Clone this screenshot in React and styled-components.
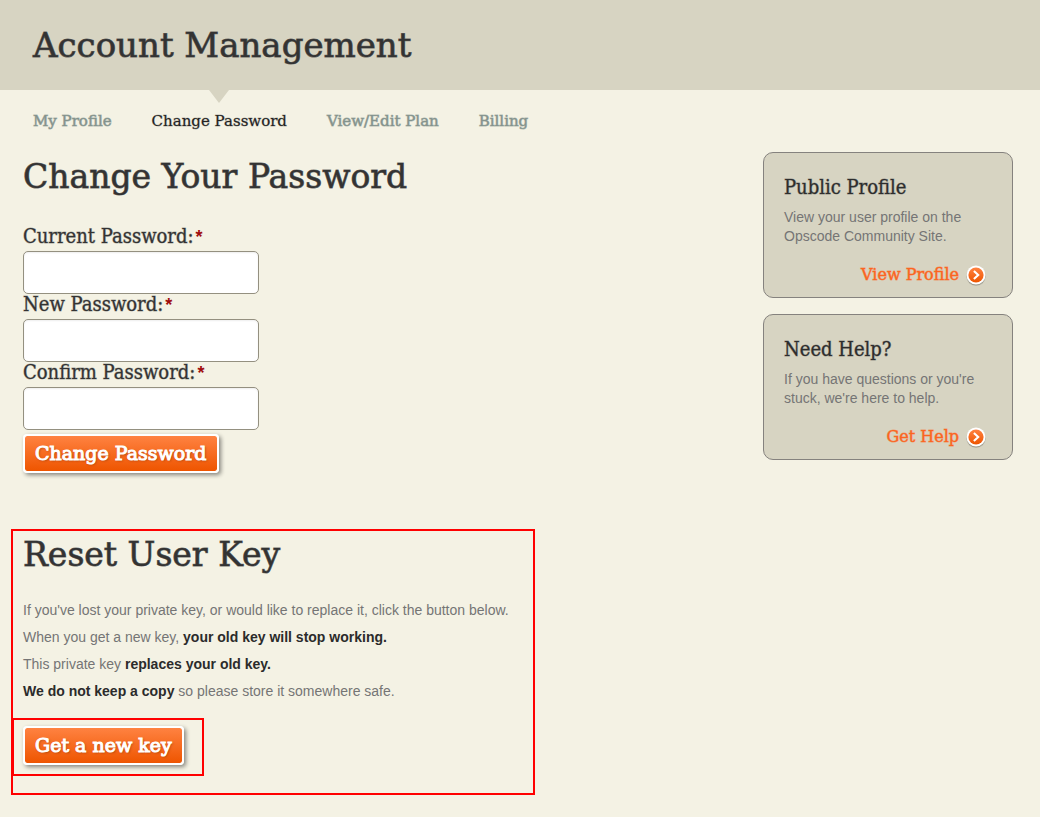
import React from "react";
import styled, { createGlobalStyle } from "styled-components";

const slab = `"DejaVu Serif", "Liberation Serif", serif`;
const slabCondensed = `"DejaVu Serif Condensed", ${slab}`;
const sans = `"Liberation Sans", Arial, sans-serif`;

const GlobalStyle = createGlobalStyle`
  * { box-sizing: border-box; }
  body {
    margin: 0;
    background: #f4f2e4;
    color: #757575;
    font: 14px/19px ${sans};
  }
  h1, h2, h3, p { margin: 0; }
`;

const Header = styled.header`
  padding: 25px 33px;
  background: #d7d4c2;
`;

const Title = styled.h1`
  font: 400 34px/40px ${slab};
  color: #333;
  -webkit-text-stroke: 1px rgba(51, 51, 51, 0.7);
`;

const Heading = styled.h2`
  margin-bottom: ${(p) => p.$gap}px;
  font: 400 33px/40px ${slab};
  color: #333;
  -webkit-text-stroke: 1px rgba(51, 51, 51, 0.7);
`;

const Nav = styled.nav`
  display: flex;
  flex-wrap: wrap;
  gap: 40px;
  padding: 22px 33px;
`;

const NavLink = styled.a`
  position: relative;
  font: 400 15px/18px ${slab};
  color: ${(p) => (p.$active ? "#222" : "#84938d")};
  -webkit-text-stroke: 1px ${(p) => (p.$active ? "rgba(34, 34, 34, 0.3)" : "rgba(132, 147, 141, 0.6)")};
  text-decoration: none;

  &::before {
    content: "";
    display: ${(p) => (p.$active ? "block" : "none")};
    position: absolute;
    top: -22px;
    left: 50%;
    margin-left: -10px;
    border: solid transparent;
    border-width: 13px 10px 0;
    border-top-color: #d7d4c2;
  }
`;

const Main = styled.main`
  display: flex;
  align-items: flex-start;
  justify-content: space-between;
  gap: 24px;
  padding: 0 27px 22px 11px;
`;

const Content = styled.div`
  padding-top: 5px;
`;

const Form = styled.form`
  display: flex;
  flex-direction: column;
  align-items: flex-start;
  padding-left: 12px;
`;

const Label = styled.label`
  padding-bottom: 4px;
  font: 400 20px/21px ${slabCondensed};
  color: #333;
  -webkit-text-stroke: 1px rgba(51, 51, 51, 0.4);
`;

const Required = styled.span`
  margin-left: 2px;
  font: 700 18px/18px ${sans};
  color: #a00d0d;
  -webkit-text-stroke: 0;
`;

const Input = styled.input`
  width: 236px;
  height: 43px;
  padding: 8px;
  border: 1px solid #949080;
  border-radius: 5px;
  background: #fff;
  box-shadow: inset 0 1px 2px #eee;
  font: 16px ${sans};
`;

const Button = styled.button`
  height: 39px;
  margin-top: ${(p) => p.$top || 0}px;
  padding: 0 10px;
  border: 2px solid #fff;
  border-radius: 4px;
  background: linear-gradient(#ff8241, #ee5500) padding-box;
  box-shadow: 2px 2px 4px rgba(0, 0, 0, 0.45);
  font: 400 19px/21px ${slab};
  color: #fff;
  -webkit-text-stroke: 1px #fff;
  text-shadow: 1px 1px 2px rgba(90, 30, 0, 0.5);
  white-space: nowrap;
`;

const ResetPanel = styled.section`
  margin-top: 56px;
  padding: 4px 24px 17px 10px;
  border: 2px solid #f00;
`;

const Line = styled.p`
  line-height: 27px;

  strong { color: #2b2b2b; }
`;

const KeyAction = styled.div`
  width: 192px;
  margin: 13px 0 0 -11px;
  padding: 6px 9px 9px;
  border: 2px solid #f00;
`;

const Sidebar = styled.aside`
  flex: 0 0 250px;
  display: grid;
  gap: 16px;
`;

const Card = styled.section`
  padding: 24px 26px 12px 20px;
  border: 1px solid #85827e;
  border-radius: 10px;
  background: #d7d4c2;
`;

const CardTitle = styled.h3`
  margin-bottom: 10px;
  font: 400 20px/21px ${slabCondensed};
  color: #2d2d2d;
  -webkit-text-stroke: 1px rgba(45, 45, 45, 0.4);
`;

const CardLink = styled.a`
  display: flex;
  align-items: center;
  justify-content: flex-end;
  gap: 7px;
  margin-top: 19px;
  font: 400 16px/20px ${slab};
  color: #fc6420;
  -webkit-text-stroke: 1px rgba(252, 100, 32, 0.5);
  text-decoration: none;

  svg { display: block; overflow: visible; }
`;

function ArrowIcon() {
  return (
    <svg width="20" height="20" viewBox="0 0 20 20" aria-hidden="true">
      <defs>
        <linearGradient id="arrowFill" x1="0" y1="0" x2="0" y2="1">
          <stop offset="0" stopColor="#ff8241" />
          <stop offset="1" stopColor="#ee5500" />
        </linearGradient>
      </defs>
      <circle cx="10" cy="11.4" r="9.7" fill="#000" opacity=".12" />
      <circle cx="10" cy="10.8" r="9.5" fill="#000" opacity=".2" />
      <circle cx="10" cy="10" r="9.5" fill="#fff" />
      <circle cx="10" cy="10" r="7.6" fill="url(#arrowFill)" />
      <path d="M7.9 6l4.3 4-4.3 4" fill="none" stroke="#fff" strokeWidth="2.1" />
    </svg>
  );
}

const tabs = ["My Profile", "Change Password", "View/Edit Plan", "Billing"];

const fields = [
  { id: "current", label: "Current Password:" },
  { id: "new", label: "New Password:" },
  { id: "confirm", label: "Confirm Password:" },
];

const cards = [
  {
    title: "Public Profile",
    text: "View your user profile on the Opscode Community Site.",
    link: "View Profile",
  },
  {
    title: "Need Help?",
    text: "If you have questions or you're stuck, we're here to help.",
    link: "Get Help",
  },
];

export default function App() {
  return (
    <>
      <GlobalStyle />
      <Header>
        <Title>Account Management</Title>
      </Header>
      <Nav>
        {tabs.map((tab) => (
          <NavLink key={tab} href="#" $active={tab === "Change Password"}>
            {tab}
          </NavLink>
        ))}
      </Nav>
      <Main>
        <Content>
          <Form>
            <Heading $gap={29}>Change Your Password</Heading>
            {fields.map((field) => (
              <React.Fragment key={field.id}>
                <Label htmlFor={field.id}>
                  {field.label}
                  <Required>*</Required>
                </Label>
                <Input id={field.id} type="password" />
              </React.Fragment>
            ))}
            <Button type="button" $top={4}>Change Password</Button>
          </Form>
          <ResetPanel>
            <Heading $gap={22}>Reset User Key</Heading>
            <Line>
              If you've lost your private key, or would like to replace it, click the button below.
            </Line>
            <Line>
              When you get a new key, <strong>your old key will stop working.</strong>
            </Line>
            <Line>
              This private key <strong>replaces your old key.</strong>
            </Line>
            <Line>
              <strong>We do not keep a copy</strong> so please store it somewhere safe.
            </Line>
            <KeyAction>
              <Button type="button">Get a new key</Button>
            </KeyAction>
          </ResetPanel>
        </Content>
        <Sidebar>
          {cards.map((card) => (
            <Card key={card.title}>
              <CardTitle>{card.title}</CardTitle>
              <p>{card.text}</p>
              <CardLink href="#">
                {card.link}
                <ArrowIcon />
              </CardLink>
            </Card>
          ))}
        </Sidebar>
      </Main>
    </>
  );
}
